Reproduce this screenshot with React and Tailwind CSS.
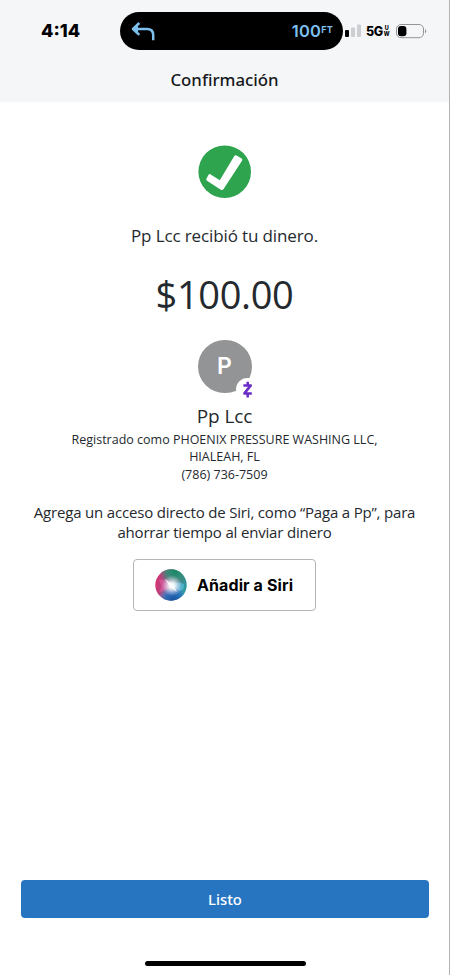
import React from 'react'

function BackArrow() {
  return (
    <svg className="w-6 h-[19px]" viewBox="0 0 24 19" fill="none" stroke="#7dc0ee" strokeWidth="2.5">
      <path d="M8.3 1 2 7l6.3 5.8" strokeLinejoin="round" />
      <path d="M1 7 7 2.8V11z" fill="#7dc0ee" stroke="none" />
      <path d="M2.5 7H16Q22.2 7 22.2 13V18.3" />
    </svg>
  )
}

function StatusBar() {
  return (
    <div className="flex items-center h-[38px] mt-3">
      <span className="w-[120px] pl-[41px] font-['Inter'] font-extrabold text-[18px] leading-[38px] text-black">4:14</span>
      <div className="flex items-center justify-between w-[223px] h-[38px] pl-[11px] pr-[10px] rounded-full bg-black">
        <BackArrow />
        <span className="flex items-start font-['Inter'] font-semibold text-[#7dc0ee] leading-none">
          <span className="text-[16.5px] tracking-[0.3px]">100</span>
          <span className="text-[9px] font-bold mt-0.5 tracking-[0.2px]">FT</span>
        </span>
      </div>
      {/* Signal */}
      <svg className="w-[17px] h-[14px] ml-0.5" viewBox="0 0 17 14">
        <rect x="0" y="6" width="4" height="7" rx="1" fill="#000" />
        <rect x="6" y="3.5" width="4" height="9.5" rx="1" fill="#ccced1" />
        <rect x="12" y="0.5" width="4" height="12.5" rx="1" fill="#ccced1" />
      </svg>
      <span className="ml-1 mt-0.5 font-['Inter'] font-extrabold text-[12.5px] tracking-[-0.4px] text-black">5G</span>
      <span className="flex flex-col ml-px font-['Inter'] font-extrabold text-[5.5px] leading-[7px] text-center text-black">
        <span>U</span>
        <span className="-mt-px">W</span>
      </span>
      {/* Battery */}
      <svg className="w-[31px] h-[15px] ml-1.5" viewBox="0 0 31 15">
        <rect x="0.5" y="0.5" width="27" height="13.2" rx="4.5" fill="none" stroke="#929497" />
        <rect x="2" y="2" width="8.4" height="10.2" rx="3" fill="#000" />
        <path d="M29 4.8q2.4 2.4 0 4.8z" fill="#929497" />
      </svg>
    </div>
  )
}

function SuccessMark() {
  return (
    <svg className="w-[54px] h-[54px]" viewBox="0 0 54 54">
      <circle cx="26.7" cy="26.7" r="26.3" fill="#2ea44f" />
      <path
        d="M12.3 29.2 21.8 35.2 36.3 11.1Q37.2 9.7 38.6 10.5L43.6 13.6Q44.9 14.5 44 15.8L25.6 44Q24.4 45.8 22.8 44.7L9 35.7Q7.7 34.7 8.5 33.4L10.6 29.8Q11.3 28.6 12.3 29.2z"
        fill="#fff"
      />
    </svg>
  )
}

function Avatar() {
  return (
    <div className="relative w-[54px] h-[54px]">
      <div className="w-[54px] h-[53px] rounded-full bg-[#939495] flex items-center justify-center font-['Inter'] text-white text-[23px] font-semibold">P</div>
      <div className="absolute left-[38px] top-[38px] w-[23px] h-[23px] rounded-full bg-white flex items-center justify-center">
        <svg className="w-[11px] h-[17px]" viewBox="0 0 11 17" fill="none" stroke="#6a2bc6" strokeWidth="2.5">
          <path d="M1.4 4.4H8.8L2.4 12.4H9.8" strokeLinejoin="round" />
          <path d="M5.7 0.8V4M5.7 12.6V16.4" />
        </svg>
      </div>
    </div>
  )
}

function SiriOrb() {
  return (
    <svg className="w-8 h-8" viewBox="0 0 32 32">
      <defs>
        <linearGradient id="base" x1="0" y1="0.4" x2="1" y2="0.6">
          <stop offset="0" stopColor="#d9306f" />
          <stop offset="0.4" stopColor="#96548d" />
          <stop offset="1" stopColor="#249d9c" />
        </linearGradient>
        <radialGradient id="green" cx="0.62" cy="0.05" r="0.5">
          <stop offset="0" stopColor="#168763" />
          <stop offset="0.5" stopColor="#2c9274" stopOpacity="0.85" />
          <stop offset="1" stopColor="#2c9274" stopOpacity="0" />
        </radialGradient>
        <radialGradient id="blue" cx="0.58" cy="1" r="0.5">
          <stop offset="0" stopColor="#174fa0" />
          <stop offset="0.55" stopColor="#2270bd" stopOpacity="0.85" />
          <stop offset="1" stopColor="#3aa7df" stopOpacity="0" />
        </radialGradient>
        <radialGradient id="glow" cx="0.53" cy="0.52" r="0.33">
          <stop offset="0" stopColor="#fff" />
          <stop offset="0.3" stopColor="#fff" stopOpacity="0.85" />
          <stop offset="1" stopColor="#e7d8ff" stopOpacity="0" />
        </radialGradient>
      </defs>
      <circle cx="16" cy="16" r="15.7" fill="url(#base)" />
      <circle cx="16" cy="16" r="15.7" fill="url(#green)" />
      <circle cx="16" cy="16" r="15.7" fill="url(#blue)" />
      <path d="M15 16Q22 11 29 15Q30 21 25 22Q20 19 15 16" fill="#54c8e4" opacity="0.6" />
      <path d="M4 11Q10 9 17 16Q11 22 4 23Q8 18 4 11" fill="#f26baa" opacity="0.45" />
      <circle cx="16" cy="16" r="15.7" fill="url(#glow)" />
      <path d="M10 10 18 15.5 22 23 15 18z" fill="#fff" opacity="0.75" />
    </svg>
  )
}

export default function App() {
  return (
    <div className="flex flex-col w-[450px] h-[975px] overflow-hidden bg-white border-r border-[#b2b3b5] font-['Open_Sans',sans-serif] text-[#24292e]">
      <header className="h-[102px] shrink-0 bg-[#f5f6f8]">
        <StatusBar />
        <h1 className="mt-[18px] text-center font-['Noto_Sans'] font-medium text-[16.8px] leading-6 text-[#17191c]">Confirmación</h1>
      </header>

      <main className="flex flex-col items-center flex-1 pt-[43px] text-center">
        <SuccessMark />
        <p className="mt-[25px] text-[17px] leading-6 tracking-[-0.12px] whitespace-nowrap">Pp Lcc recibió tu dinero.</p>
        <p className="mt-[21px] text-[38px] leading-[50px] tracking-[-0.35px]">$100.00</p>
        <div className="mt-[21px]">
          <Avatar />
        </div>
        <h2 className="mt-[9px] text-[19px] leading-[26px] tracking-[-0.1px]">Pp Lcc</h2>
        <div className="mt-0.5 text-[12.5px] leading-[17.5px] whitespace-nowrap">
          <p>Registrado como PHOENIX PRESSURE WASHING LLC,</p>
          <p className="-mt-px mb-px">HIALEAH, FL</p>
          <p>(786) 736-7509</p>
        </div>
        <p className="mt-[18px] text-[15px] leading-5 tracking-[-0.18px] whitespace-nowrap">
          Agrega un acceso directo de Siri, como “Paga a Pp”, para
          <br />
          ahorrar tiempo al enviar dinero
        </p>
        <button className="flex items-center w-[183px] h-[52px] mt-[17px] pl-[21px] gap-[10px] rounded-[4px] border border-[#b4b5b7] bg-white">
          <SiriOrb />
          <span className="font-['Inter'] font-bold text-[16px] tracking-[0.1px] text-black whitespace-nowrap">Añadir a Siri</span>
        </button>
      </main>

      <footer className="flex flex-col items-center shrink-0 pl-[21px] pr-5">
        <button className="w-full h-[38px] rounded-[4px] bg-[#2775c1] text-white font-['Noto_Sans'] text-[14.8px] font-medium">Listo</button>
        <div className="w-[161px] h-[5px] mt-[43px] mb-[9px] rounded-full bg-black" />
      </footer>
    </div>
  )
}
